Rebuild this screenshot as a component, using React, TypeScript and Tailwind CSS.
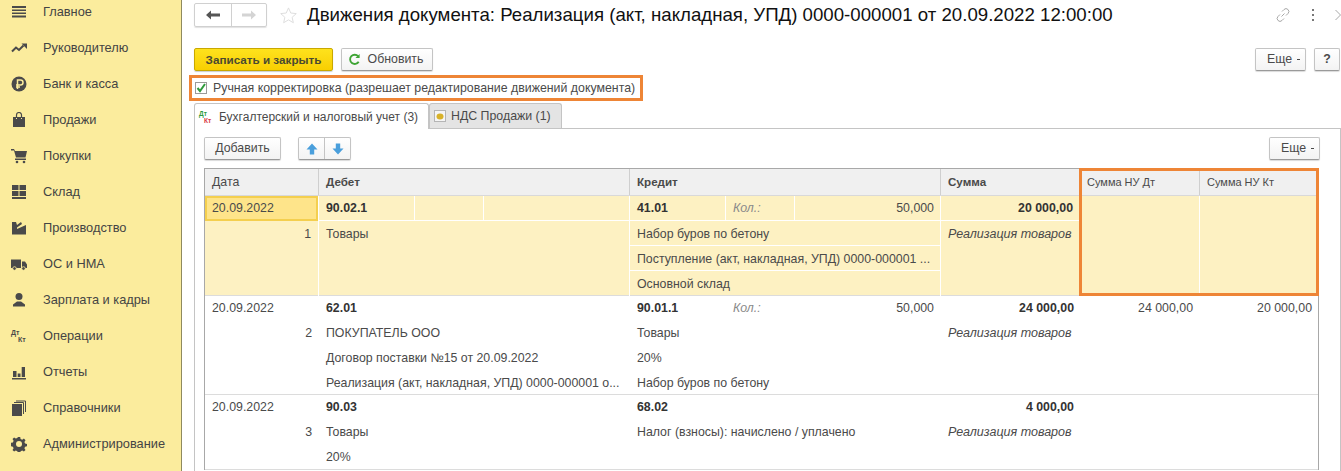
import { ReactNode } from 'react'

const font = { fontFamily: '"Liberation Sans", Arial, sans-serif' }

function MenuIcon({ name }: { name: string }) {
  const c = '#4a4a4a'
  if (name === 'dtkt') {
    return (
      <div className="h-[14px] w-[16px] text-[7px] font-bold leading-[7px] text-[#4a4a4a]">
        <span className="block">Дт</span>
        <span className="block pl-[7px]">Кт</span>
      </div>
    )
  }
  const shapes: Record<string, ReactNode> = {
    main: <path d="M1 2h14v2H1zM1 5.500h14V7H1zM1 8.500h14V10H1zM1 11.500h14v2H1z" fill={c} />,
    chart: (
      <>
        <path d="M1 11.500l4-4 3 2.500 4.500-4.500" fill="none" stroke={c} strokeWidth="2" />
        <path d="M10.500 3.500H16V9z" fill={c} />
      </>
    ),
    ruble: (
      <>
        <circle cx="8" cy="8" r="7.500" fill={c} />
        <path d="M6.500 13V4h3a2.300 2.300 0 0 1 0 5H5M5 11h4" stroke="#fbec9d" strokeWidth="1.500" fill="none" />
      </>
    ),
    bag: (
      <>
        <path d="M2 5h3v2h1V5h4v2h1V5h3v10H2z" fill={c} />
        <path d="M5.500 6V3a2.500 2.500 0 0 1 5 0v3" stroke={c} strokeWidth="1.200" fill="none" />
      </>
    ),
    cart: (
      <>
        <path d="M0 1h3l1 2h12l-1.500 6.500H5L3 2.500H0z" fill={c} />
        <path d="M4 10.500h11V12H4z" fill={c} />
        <circle cx="6" cy="14" r="1.300" fill={c} />
        <circle cx="13" cy="14" r="1.300" fill={c} />
      </>
    ),
    grid: <path d="M1 1h6.500v5H1zM8.500 1H15v5H8.500zM1 7h6.500v5H1zM8.500 7H15v5H8.500zM1 13h14v2H1z" fill={c} />,
    factory: <path d="M1 14.500V2h4l1 3 4-3 1 2-5 3.500V9l9-4v9.500z" fill={c} />,
    truck: (
      <>
        <path d="M0 3.500h10v8.500H0zM11 5.500h3l2 3V12h-5z" fill={c} />
        <circle cx="3.500" cy="12.500" r="1.800" fill={c} stroke="#fbec9d" strokeWidth="0.800" />
        <circle cx="12.500" cy="12.500" r="1.800" fill={c} stroke="#fbec9d" strokeWidth="0.800" />
      </>
    ),
    user: (
      <>
        <circle cx="8" cy="4.500" r="3.500" fill={c} />
        <path d="M2 14.500v-2L6 9.500h4l4 3v2z" fill={c} />
      </>
    ),
    bars: <path d="M1 14h14v1.500H1zM2 7h3.500v6H2zM6.700 9.500h2.800V13H6.700zM10.700 3H14v10h-3.300z" fill={c} />,
    books: (
      <>
        <path d="M1 4h10v12H1z" fill={c} />
        <path d="M3 2.500h9.500V14M5 1h9.500v11" stroke={c} strokeWidth="1" fill="none" />
      </>
    ),
    gear: (
      <>
        <path d="M6.800 1h2.400l.4 2 1.600.7 1.700-1.100 1.600 1.600-1.100 1.700.7 1.600 2 .4v2.400l-2 .4-.7 1.600 1.100 1.700-1.600 1.600-1.700-1.100-1.600.7-.4 2H6.800l-.4-2-1.600-.7-1.700 1.100-1.600-1.600 1.100-1.700-.7-1.600-2-.4V6.800l2-.4.7-1.600-1.100-1.700 1.600-1.600 1.700 1.100 1.600-.7z" fill={c} />
        <circle cx="8" cy="8" r="3" fill="#fbec9d" />
      </>
    ),
  }
  return (
    <svg viewBox="0 0 16 16" className="h-[16px] w-[16px]">
      {shapes[name]}
    </svg>
  )
}

const menu = [
  ['main', 'Главное'],
  ['chart', 'Руководителю'],
  ['ruble', 'Банк и касса'],
  ['bag', 'Продажи'],
  ['cart', 'Покупки'],
  ['grid', 'Склад'],
  ['factory', 'Производство'],
  ['truck', 'ОС и НМА'],
  ['user', 'Зарплата и кадры'],
  ['dtkt', 'Операции'],
  ['bars', 'Отчеты'],
  ['books', 'Справочники'],
  ['gear', 'Администрирование'],
]

function Btn({ children, className = '' }: { children: ReactNode; className?: string }) {
  return (
    <div
      className={`flex h-[23px] items-center justify-center rounded-[2px] border border-[#c4c4c4] border-b-[#9a9a9a] bg-gradient-to-b from-white to-[#f3f3f3] text-[12.35px] text-[#4a4a4a] shadow-[0_1px_1px_rgba(0,0,0,0.15)] ${className}`}
    >
      {children}
    </div>
  )
}

function More({ className = '' }: { className?: string }) {
  return (
    <Btn className={`w-[51px] gap-[5px] pl-[6px] ${className}`}>
      Еще<span className="h-px w-[3px] bg-[#4a4a4a]" />
    </Btn>
  )
}

function Arrow({ down, color }: { down?: boolean; color: string }) {
  return (
    <svg viewBox="0 0 12 12" className={`h-[12px] w-[12px] ${down ? 'rotate-180' : ''}`}>
      <path d="M6 .5L.5 6.500H3.800V11.500H8.200V6.500H11.500z" fill={color} />
    </svg>
  )
}

type Row = {
  date: string
  num: string
  debit: string[]
  credit: string[]
  qty?: string
  sum: string
  note?: string
  nuD?: string
  nuK?: string
  h: string
}

const rows: Row[] = [
  {
    date: '20.09.2022', num: '1', debit: ['90.02.1', 'Товары'],
    credit: ['41.01', 'Набор буров по бетону', 'Поступление (акт, накладная, УПД) 0000-000001 ...', 'Основной склад'],
    qty: '50,000', sum: '20 000,00', note: 'Реализация товаров', h: 'h-[100px]',
  },
  {
    date: '20.09.2022', num: '2',
    debit: ['62.01', 'ПОКУПАТЕЛЬ ООО', 'Договор поставки №15 от 20.09.2022', 'Реализация (акт, накладная, УПД) 0000-000001 о...'],
    credit: ['90.01.1', 'Товары', '20%', 'Набор буров по бетону'],
    qty: '50,000', sum: '24 000,00', note: 'Реализация товаров', nuD: '24 000,00', nuK: '20 000,00', h: 'h-[99px]',
  },
  {
    date: '20.09.2022', num: '3', debit: ['90.03', 'Товары', '20%'],
    credit: ['68.02', 'Налог (взносы): начислено / уплачено'],
    sum: '4 000,00', note: 'Реализация товаров', h: 'h-[75px]',
  },
]

const cols = 'grid grid-cols-[114px_311px_311px_139px_120px_118px]'

function Line({ text, active, last, shift }: { text: string; active: boolean; last?: boolean; shift?: boolean }) {
  return (
    <div
      className={`flex items-center whitespace-nowrap px-[7px] ${active || shift ? 'h-[25px]' : 'h-[24.9px]'} ${shift ? 'pt-px' : ''} ${active && !last ? 'border-b border-white pt-[2px]' : ''} ${active && last ? 'pt-px' : ''}`}
    >
      {text}
    </div>
  )
}

function TableRow({ row, active }: { row: Row; active: boolean }) {
  const cell = active ? 'border-r border-white' : ''
  const second = active ? 'pt-px' : ''
  return (
    <div className={`${cols} ${row.h} border-b border-[#dcdcdc] text-[12.35px] text-[#4a4a4a] ${active ? 'bg-[#fdf1c2]' : 'bg-white'}`}>
      <div className={cell}>
        <div
          className={`flex h-[25px] items-center ${active ? 'border-2 border-[#f4cf4f] bg-[#fee48a] px-[5px]' : 'px-[7px]'}`}
        >
          {row.date}
        </div>
        <div className={`flex h-[25px] items-center justify-end pr-[7px] ${second}`}>{row.num}</div>
      </div>
      <div className={cell}>
        {active ? (
          <div className="grid h-[25px] grid-cols-[96px_69px_1fr] border-b border-white">
            <div className="flex items-center border-r border-white px-[7px] pt-px font-bold text-[#333]">{row.debit[0]}</div>
            <div className="border-r border-white" />
            <div />
          </div>
        ) : (
          <div className="flex h-[25px] items-center px-[7px] font-bold text-[#333]">{row.debit[0]}</div>
        )}
        {row.debit.slice(1).map((t) => (
          <Line key={t} text={t} active={false} shift={active} />
        ))}
      </div>
      <div className={cell}>
        <div className={`grid h-[25px] grid-cols-[96px_69px_1fr] ${active ? 'border-b border-white' : ''}`}>
          <div className={`flex items-center px-[7px] font-bold text-[#333] ${active ? 'border-r border-white pt-px' : ''}`}>{row.credit[0]}</div>
          <div className={`flex items-center px-[7px] italic text-[#8a8a8a] ${active ? 'border-r border-white pt-px' : ''}`}>
            {row.qty ? 'Кол.:' : ''}
          </div>
          <div className={`flex items-center justify-end ${active ? 'pr-[6px] pt-px' : 'pr-[7px]'}`}>{row.qty}</div>
        </div>
        {row.credit.slice(1).map((t, i) => (
          <Line key={t} text={t} active={active} last={i === row.credit.length - 2} />
        ))}
      </div>
      <div className={cell}>
        <div className={`flex h-[25px] items-center justify-end pr-[6px] font-bold text-[#333] ${active ? 'border-b border-white pt-px' : ''}`}>
          {row.sum}
        </div>
        <div className={`flex h-[25px] items-center whitespace-nowrap px-[7px] text-[12.5px] italic ${second}`}>{row.note}</div>
      </div>
      <div className={cell}>
        <div className="flex h-[25px] items-center justify-end pr-[7px]">{row.nuD}</div>
      </div>
      <div>
        <div className="flex h-[25px] items-center justify-end pr-[6px]">{row.nuK}</div>
      </div>
    </div>
  )
}

export default function App() {
  return (
    <div className="flex h-[471px] w-[1341px] overflow-hidden bg-white" style={font}>
      <aside className="h-full w-[182px] shrink-0 border-r border-[#8f8a5e] bg-[#fbec9d]">
        <div className="-mt-[6px]">
          {menu.map(([icon, label]) => (
            <div key={label} className="flex h-[36px] items-center text-[12.8px] text-[#444]">
              <div className="mr-[5px] flex w-[38px] justify-center">
                <MenuIcon name={icon} />
              </div>
              {label}
            </div>
          ))}
        </div>
      </aside>

      <main className="min-w-0 flex-1 pl-[12px]">
        <header className="flex h-[30px] items-center">
          <div className="flex h-[24px] w-[73px] rounded-[2px] border border-[#d0d0d0] shadow-[0_1px_1px_rgba(0,0,0,0.12)]">
            <div className="flex w-[37px] items-center justify-center border-r border-[#d0d0d0]">
              <svg viewBox="0 0 16 12" className="h-[12px] w-[16px]">
                <path d="M1 6l5-4.500V4.500h9v3H6v3z" fill="#555" />
              </svg>
            </div>
            <div className="flex flex-1 items-center justify-center">
              <svg viewBox="0 0 16 12" className="h-[12px] w-[16px]">
                <path d="M15 6l-5-4.500V4.500H1v3h9v3z" fill="#d4d4d4" />
              </svg>
            </div>
          </div>
          <svg viewBox="0 0 20 20" className="ml-[12px] h-[19px] w-[19px]">
            <path d="M10 2l2.400 5.400 5.800.6-4.400 3.900 1.300 5.700L10 14.600l-5.100 3 1.300-5.700L1.800 8l5.800-.6z" fill="none" stroke="#dcdcdc" />
          </svg>
          <h1 className="ml-[9px] whitespace-nowrap text-[18.67px] font-normal leading-none text-[#111]">
            Движения документа: Реализация (акт, накладная, УПД) 0000-000001 от 20.09.2022 12:00:00
          </h1>
          <div className="ml-auto flex items-center gap-[21px]">
            <svg viewBox="0 0 16 16" className="h-[16px] w-[16px]" fill="none" stroke="#a8a8a8" strokeWidth="1">
              <path d="M6.500 9.500l3-3M7 4.500l2-2a2.800 2.800 0 0 1 4 4l-2 2M9 11.500l-2 2a2.800 2.800 0 0 1-4-4l2-2" />
            </svg>
            <div className="flex h-[12px] flex-col justify-between">
              <span className="h-[2px] w-[2px] bg-[#777]" />
              <span className="h-[2px] w-[2px] bg-[#777]" />
              <span className="h-[2px] w-[2px] bg-[#777]" />
            </div>
            <svg viewBox="0 0 6 12" className="h-[12px] w-[6px]" fill="none" stroke="#a8a8a8">
              <path d="M.5 1l5 5-5 5" />
            </svg>
          </div>
        </header>

        <div className="mt-[18px] flex items-center pr-[1px]">
          <div className="flex h-[23px] w-[139px] items-center justify-center rounded-[2px] border border-[#c9a800] bg-gradient-to-b from-[#fee21c] to-[#f8cf00] text-[11.7px] font-bold text-[#4a4a30] shadow-[0_1px_1px_rgba(0,0,0,0.2)]">
            Записать и закрыть
          </div>
          <Btn className="ml-[8px] w-[92px] gap-[7px] pr-[3px]">
            <svg viewBox="0 0 14 14" className="h-[13px] w-[13px]" fill="none" stroke="#3fa535" strokeWidth="2">
              <path d="M11.500 9.500A5 5 0 1 1 11 3.500" />
              <path d="M12.500 1v4.500H8" fill="#3fa535" stroke="none" />
            </svg>
            Обновить
          </Btn>
          <More className="ml-auto" />
          <Btn className="ml-[8px] w-[26px] font-bold">?</Btn>
        </div>

        <div className="-ml-[5px] mt-[4px] flex h-[26px] w-[454px] items-center gap-[3px] border-[3px] border-[#ee8536] pl-[3px] text-[12.35px] text-[#4a4a4a]">
          <div className="flex h-[12px] w-[12px] items-center justify-center border border-[#9a9a9a] bg-white">
            <svg viewBox="0 0 12 12" className="h-[12px] w-[12px] overflow-visible">
              <path d="M2.500 6l2.500 3 5-7" fill="none" stroke="#2f9a3c" strokeWidth="2" />
            </svg>
          </div>
          <span className="whitespace-nowrap pl-[3px]">Ручная корректировка (разрешает редактирование движений документа)</span>
        </div>

        <div className="mt-[2px] flex h-[25px] items-end text-[#4a4a4a]">
          <div className="z-10 -mb-px flex h-[26px] w-[235px] items-center gap-[6px] rounded-t-[3px] border border-b-0 border-[#c4c4c4] bg-white pl-[4px] text-[12px]">
            <div className="h-[14px] w-[14px] text-[6.500px] font-bold leading-[7px]">
              <span className="block text-[#2f9a3c]">Дт</span>
              <span className="block pl-[5px] text-[#d9363e]">Кт</span>
            </div>
            Бухгалтерский и налоговый учет (3)
          </div>
          <div className="flex h-[25px] w-[133px] items-center gap-[5px] rounded-t-[3px] border border-b-0 border-[#c4c4c4] bg-[#e4e4e4] pl-[4px] text-[12.35px]">
            <svg viewBox="0 0 12 12" className="h-[12px] w-[12px]">
              <rect x=".5" y=".5" width="11" height="11" fill="#f5f5f5" stroke="#b5b5b5" />
              <ellipse cx="6" cy="6.500" rx="3.500" ry="3" fill="#d8b22a" />
            </svg>
            НДС Продажи (1)
          </div>
        </div>

        <section className="h-[400px] border border-[#c4c4c4] pl-[9px] pr-[20px] pt-[8px]">
          <div className="flex items-center">
            <Btn className="w-[77px]">Добавить</Btn>
            <div className="ml-[17px] flex h-[23px] w-[53px] rounded-[2px] border border-[#c4c4c4] border-b-[#9a9a9a] bg-gradient-to-b from-white to-[#f3f3f3] shadow-[0_1px_1px_rgba(0,0,0,0.15)]">
              <div className="flex flex-1 items-center justify-center border-r border-[#c4c4c4]">
                <Arrow color="#4a9fdc" />
              </div>
              <div className="flex flex-1 items-center justify-center">
                <Arrow down color="#4a9fdc" />
              </div>
            </div>
            <More className="ml-auto" />
          </div>

          <div className="relative mt-[8px] w-fit border-x border-t border-[#a8a8a8]">
            <div className={`${cols} h-[27px] border-b border-[#d9d9d9] bg-[#f0f0f0] text-[#4a4a4a]`}>
              <div className="flex items-center border-r border-[#cfcfcf] px-[7px] text-[12.35px]">Дата</div>
              <div className="flex items-center border-r border-[#cfcfcf] px-[7px] text-[11.6px] font-bold">Дебет</div>
              <div className="flex items-center border-r border-[#cfcfcf] px-[7px] text-[11.6px] font-bold">Кредит</div>
              <div className="flex items-center border-r border-[#cfcfcf] px-[7px] text-[11.6px] font-bold">Сумма</div>
              <div className="flex items-center border-r border-[#cfcfcf] px-[7px] text-[11px]">Сумма НУ Дт</div>
              <div className="flex items-center px-[7px] text-[11px]">Сумма НУ Кт</div>
            </div>
            {rows.map((r, i) => (
              <TableRow key={r.num} row={r} active={i === 0} />
            ))}
            <div className="absolute left-[874px] top-[-1px] h-[128px] w-[240px] border-[3px] border-[#ee8536]" />
          </div>
        </section>
      </main>
    </div>
  )
}
